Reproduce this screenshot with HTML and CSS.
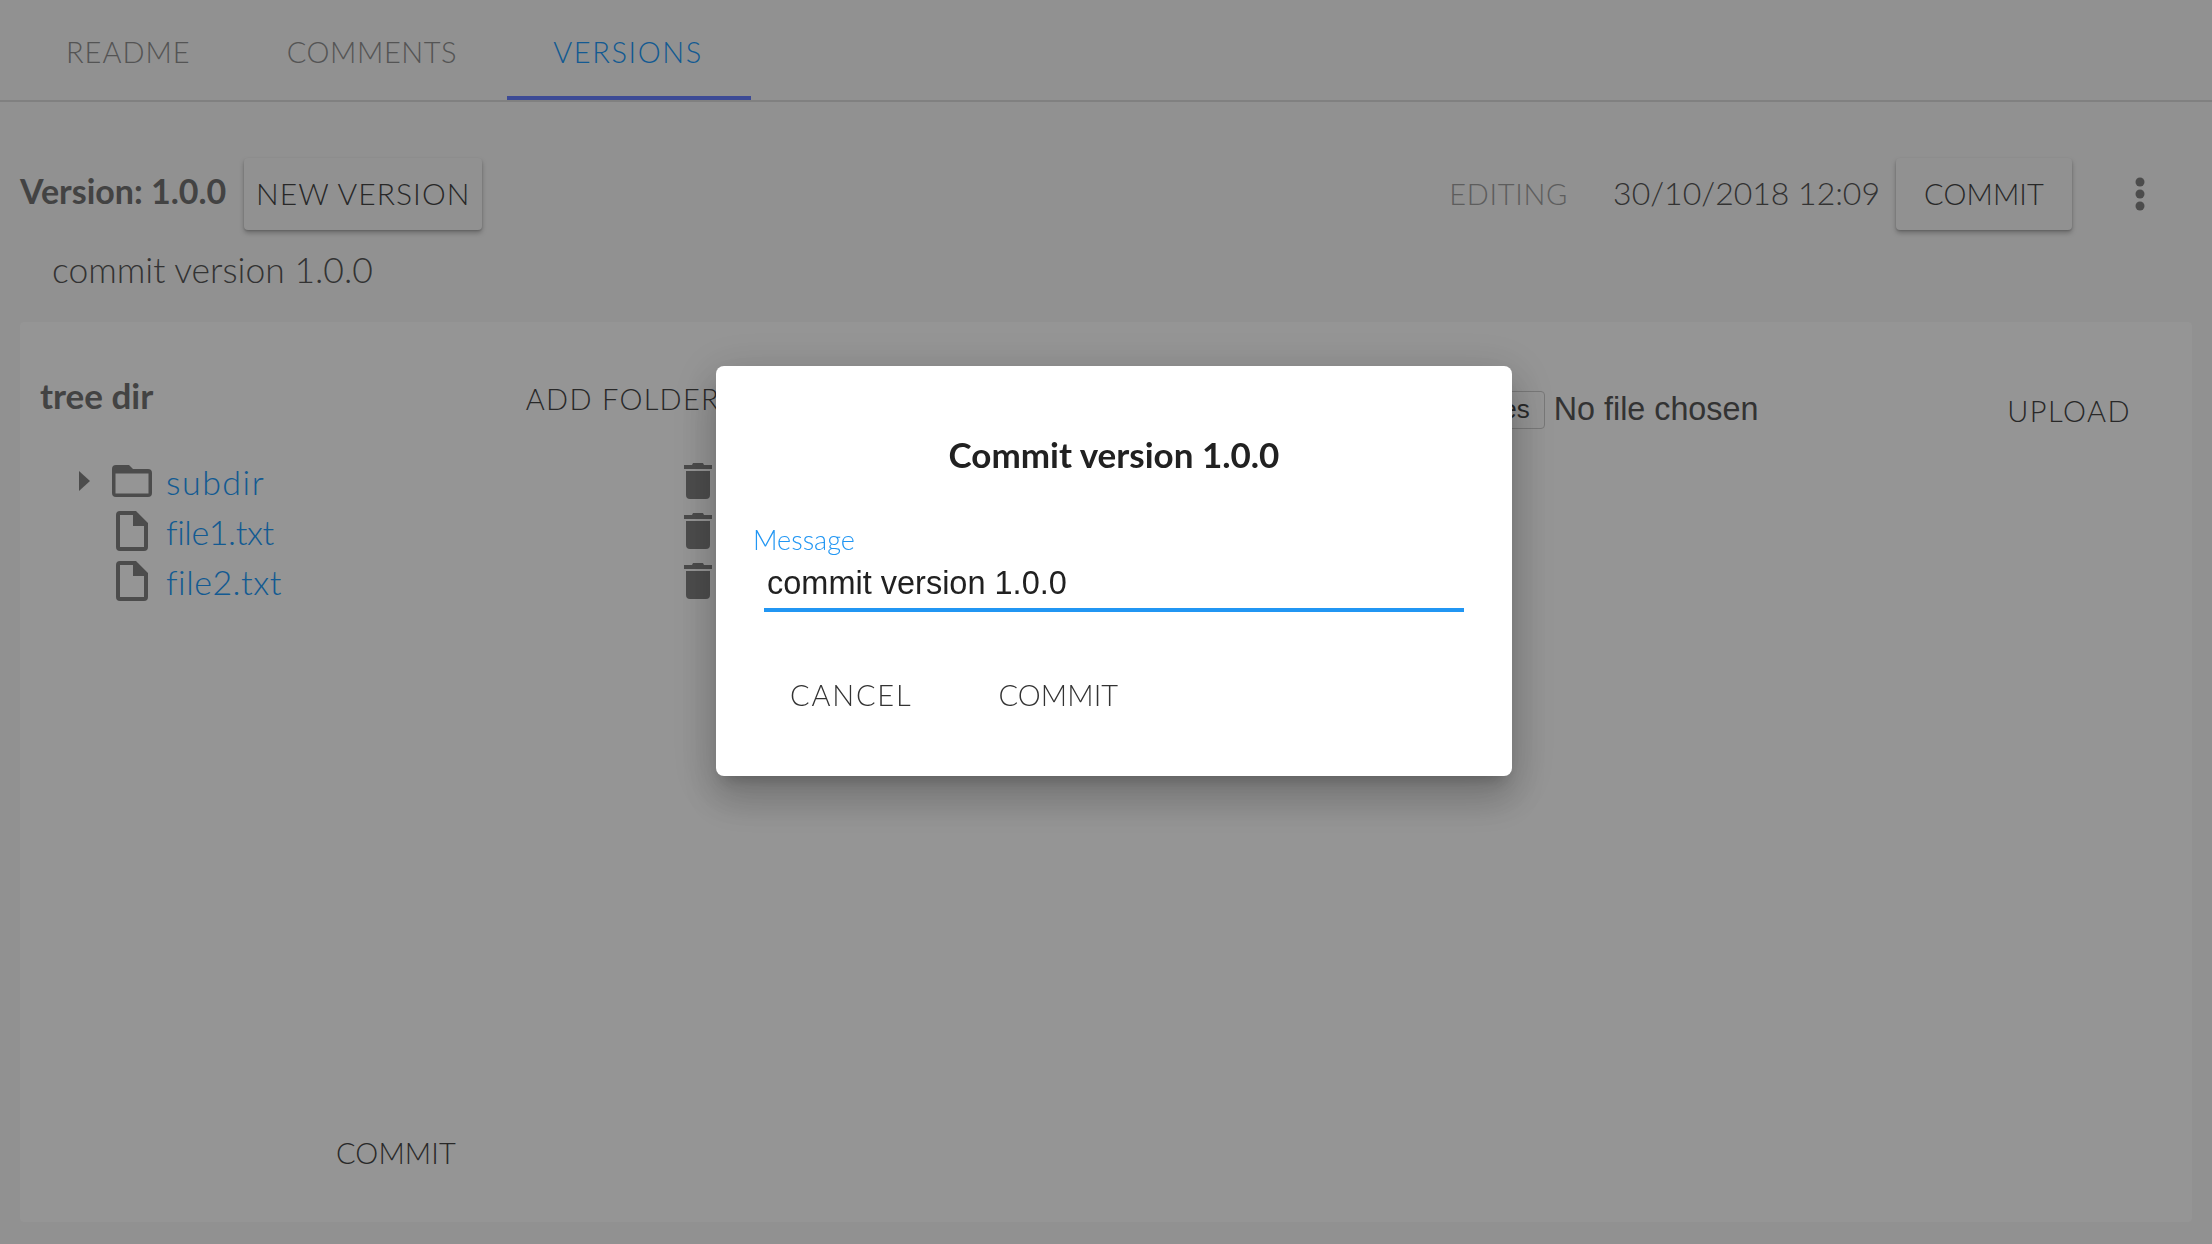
FILE: index.html
```html
<!DOCTYPE html>
<html lang="en">
<head>
    <meta charset="UTF-8">
    <meta name="viewport" content="width=device-width, initial-scale=1.0">
    <title>Versions</title>
    <link rel="stylesheet" href="styles.css">
</head>
<body>

<div class="page">
    <div class="tabs">
        <div class="tab tab-readme">README</div>
        <div class="tab tab-comments">COMMENTS</div>
        <div class="tab tab-active">VERSIONS</div>
    </div>

    <div class="version-bar">
        <span class="version-title">Version: 1.0.0</span>
        <button class="raised new-version">NEW VERSION</button>
        <span class="spacer"></span>
        <span class="status">EDITING</span>
        <span class="date">30/10/2018 12:09</span>
        <button class="raised commit-top">COMMIT</button>
        <svg class="more" width="10" height="34" viewBox="0 0 10 34">
            <circle cx="5" cy="5" r="4.5"/><circle cx="5" cy="17" r="4.5"/><circle cx="5" cy="29" r="4.5"/>
        </svg>
    </div>
    <p class="description">commit version 1.0.0</p>

    <div class="panel">
        <div class="tree-col">
            <div class="tree-head">
                <span class="tree-title">tree dir</span>
                <span class="flat-btn">ADD FOLDER</span>
            </div>
            <div class="tree-row">
                <svg class="arrow" width="12" height="20" viewBox="0 0 12 20"><path d="M0 0l11 10L0 20z"/></svg>
                <svg class="folder" width="40" height="32" viewBox="0 0 40 32"><path d="M4 0h13l4 4h15a4 4 0 0 1 4 4v20a4 4 0 0 1-4 4H4a4 4 0 0 1-4-4V4a4 4 0 0 1 4-4zm-.5 8.500v20h33v-20z" fill-rule="evenodd"/></svg>
                <a class="tree-link link-dir">subdir</a>
                <svg class="trash" width="28" height="36" viewBox="0 0 28 36"><use href="#trash-icon"/></svg>
            </div>
            <div class="tree-row">
                <svg class="file" width="32" height="40" viewBox="0 0 32 40"><use href="#file-icon"/></svg>
                <a class="tree-link">file1.txt</a>
                <svg class="trash" width="28" height="36" viewBox="0 0 28 36"><use href="#trash-icon"/></svg>
            </div>
            <div class="tree-row">
                <svg class="file" width="32" height="40" viewBox="0 0 32 40"><use href="#file-icon"/></svg>
                <a class="tree-link link-wide">file2.txt</a>
                <svg class="trash" width="28" height="36" viewBox="0 0 28 36"><use href="#trash-icon"/></svg>
            </div>
            <div class="commit-bottom"><span class="flat-btn commit-label">COMMIT</span></div>
        </div>
        <div class="upload-col">
            <span class="file-btn">Choose Files</span>
            <span class="file-name">No file chosen</span>
            <span class="flat-btn upload">UPLOAD</span>
        </div>
    </div>
</div>

<svg class="defs" width="0" height="0">
    <symbol id="trash-icon" viewBox="0 0 28 36">
        <path d="M9 0h10l1 2h8v4H0V2h8zM2 8h24v24a4 4 0 0 1-4 4H6a4 4 0 0 1-4-4z"/>
    </symbol>
    <symbol id="file-icon" viewBox="0 0 32 40">
        <path fill-rule="evenodd" d="M4 0h16l12 12v24a4 4 0 0 1-4 4H4a4 4 0 0 1-4-4V4a4 4 0 0 1 4-4zm0 4v32h24V15H17V4z"/>
    </symbol>
</svg>

<div class="overlay">
    <div class="dialog">
        <h2 class="dialog-title">Commit version 1.0.0</h2>
        <label class="field-label">Message</label>
        <div class="field-input">commit version 1.0.0</div>
        <div class="dialog-actions">
            <span class="dialog-btn btn-cancel">CANCEL</span>
            <span class="dialog-btn commit-label">COMMIT</span>
        </div>
    </div>
</div>

</body>
</html>
```

FILE: styles.css
```css
html, body {
    margin: 0;
    height: 100%;
}
body {
    font-family: 'Lato', 'Liberation Sans', sans-serif;
    font-weight: 300;
    background-color: #f2f2f2;
    color: #3a3a3a;
    overflow: hidden;
}
.page {
    height: 1244px;
    box-sizing: border-box;
    display: flex;
    flex-direction: column;
}

/* tabs */
.tabs {
    display: flex;
    height: 100px;
    padding-left: 18px;
    border-bottom: 2px solid #d6d6d6;
    flex-shrink: 0;
}
.tab {
    padding: 0 48px;
    height: 100px;
    box-sizing: border-box;
    line-height: 104px;
    font-size: 29px;
    color: #8c8c8c;
}
.tab-readme {
    letter-spacing: 1px;
}
.tab-comments {
    letter-spacing: 0.6px;
}
.tab-active {
    margin-left: 2px;
    padding-left: 46px;
    letter-spacing: 1.6px;
    color: #2196f3;
    border-bottom: 4px solid #647cf8;
}

/* version header */
.version-bar {
    display: flex;
    align-items: center;
    height: 72px;
    margin-top: 56px;
    padding: 0 67px 0 20px;
}
.version-title {
    font-size: 34px;
    font-weight: 700;
    color: #707070;
    margin-right: 18px;
    margin-bottom: 7px;
}
.raised {
    height: 72px;
    border: none;
    border-radius: 4px;
    background-color: #f2f2f2;
    box-shadow: 0 3px 5px rgba(0, 0, 0, 0.25), 0 1px 2px rgba(0, 0, 0, 0.15);
    font-family: inherit;
    font-weight: 300;
    font-size: 30px;
    color: #444;
    padding: 0 0 2px;
}
.new-version {
    width: 238px;
    letter-spacing: 1.1px;
}
.spacer {
    flex: 1;
}
.status {
    font-size: 29px;
    letter-spacing: 0.7px;
    color: #9c9c9c;
    margin-right: 45px;
    margin-bottom: 2px;
}
.date {
    font-size: 32px;
    color: #555;
    margin-right: 16px;
    margin-bottom: 4px;
}
.commit-top {
    width: 176px;
    margin-right: 63px;
    font-size: 29px;
    letter-spacing: 0.1px;
}
.more {
    fill: #7f7f7f;
}
.description {
    margin: 20px 0 0 52px;
    font-size: 35.500px;
    line-height: 40px;
    color: #555;
}

/* panel */
.panel {
    flex: 1;
    display: flex;
    margin: 32px 20px 22px 20px;
    background-color: #f8f8f8;
    border-radius: 4px;
    position: relative;
}
.tree-col {
    width: 672px;
    padding: 0 0 0 20px;
    display: flex;
    flex-direction: column;
}
.tree-head {
    display: flex;
    align-items: center;
    justify-content: space-between;
    height: 40px;
    margin-top: 53px;
    margin-bottom: 41px;
}
.tree-title {
    font-size: 35px;
    font-weight: 700;
    color: #707070;
}
.flat-btn {
    font-size: 29px;
    letter-spacing: 0.6px;
    color: #444;
}
.tree-head .flat-btn {
    margin-top: 6px;
    margin-right: -8px;
    letter-spacing: 1.3px;
}
.commit-label {
    letter-spacing: 0.1px;
}
.tree-row {
    display: flex;
    align-items: center;
    height: 50px;
    position: relative;
}
.arrow {
    margin-left: 39px;
    margin-right: 21px;
    fill: #7f7f7f;
}
.folder {
    fill: #7f7f7f;
    margin-right: 14px;
}
.file {
    fill: #7f7f7f;
    margin-left: 76px;
    margin-right: 18px;
}
.tree-link {
    font-size: 34px;
    letter-spacing: -0.4px;
    color: #2196f3;
    flex: 1;
}
.link-dir {
    letter-spacing: 1.5px;
}
.link-wide {
    letter-spacing: 0.5px;
}
.trash {
    fill: #7f7f7f;
}
.commit-bottom {
    margin-top: auto;
    margin-bottom: 52px;
    padding-left: 296px;
}
.defs {
    position: absolute;
}
.upload-col {
    flex: 1;
    display: flex;
    align-items: center;
    height: 40px;
    margin-top: 66px;
    padding-right: 61px;
    font-family: 'Liberation Sans', sans-serif;
    font-weight: 400;
}
.file-btn {
    margin-left: 651px;
    box-sizing: border-box;
    height: 38px;
    line-height: 34px;
    margin-top: 4px;
    padding: 0 14px;
    border: 1px solid #c8c8c8;
    border-radius: 4px;
    font-size: 26px;
    white-space: nowrap;
    color: #444;
}
.file-name {
    font-size: 32.300px;
    margin: 3px 0 0 9px;
    color: #555;
    flex: 1;
    white-space: nowrap;
}
.upload {
    font-family: 'Lato', sans-serif;
    font-weight: 300;
    letter-spacing: 1.5px;
    margin-top: 4px;
}

/* dialog */
.overlay {
    position: fixed;
    top: 0;
    left: 0;
    width: 100%;
    height: 100%;
    background-color: rgba(0, 0, 0, 0.4);
    display: flex;
    align-items: flex-start;
    justify-content: center;
    padding-left: 16px;
    padding-top: 366px;
    box-sizing: border-box;
}
.dialog {
    width: 796px;
    height: 410px;
    box-sizing: border-box;
    background-color: #fff;
    border-radius: 8px;
    box-shadow: 0 11px 15px -7px rgba(0, 0, 0, 0.2), 0 24px 38px 3px rgba(0, 0, 0, 0.14), 0 9px 46px 8px rgba(0, 0, 0, 0.12);
    padding: 68px 48px 0 37px;
    color: #212121;
}
.dialog-title {
    margin: 0 0 0 11px;
    font-size: 35px;
    line-height: 40px;
    font-weight: 700;
    text-align: center;
}
.field-label {
    display: block;
    margin-top: 51px;
    font-size: 27px;
    line-height: 30px;
    color: #2196f3;
}
.field-input {
    margin: 8px 0 0 11px;
    height: 45px;
    line-height: 40px;
    padding-left: 3px;
    border-bottom: 4px solid #2196f3;
    font-family: 'Liberation Sans', sans-serif;
    font-weight: 400;
    font-size: 32.500px;
}
.dialog-actions {
    display: flex;
    gap: 86px;
    margin-top: 65px;
    padding-left: 37px;
}
.dialog-btn {
    font-size: 29px;
    color: #333;
}
.btn-cancel {
    letter-spacing: 1.8px;
}
```
